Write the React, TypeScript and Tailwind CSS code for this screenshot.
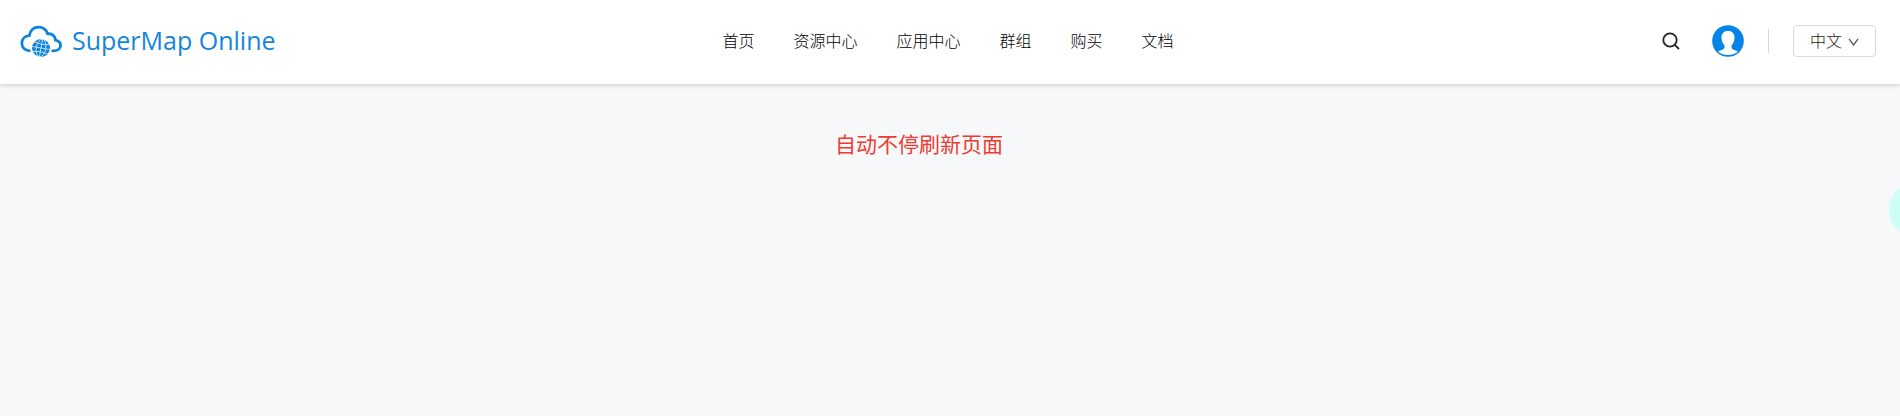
import React from 'react';

const navItems = [
    { label: '首页', href: '#home' },
    { label: '资源中心', href: '#resources' },
    { label: '应用中心', href: '#apps' },
    { label: '群组', href: '#groups' },
    { label: '购买', href: '#buy' },
    { label: '文档', href: '#docs' },
];

const Logo: React.FC = () => (
    <svg viewBox="0 0 42 32" className="h-8 w-[42px]" fill="none" aria-hidden="true">
        <path
            d="M10.5 25.8C5.400 26 1.800 22.500 1.800 18.300C1.800 14 5 11 9.300 10.700C10.400 5.300 13.800 2.200 18.600 2.200C23 2.200 26.200 4.600 27.600 8.800C32.300 8.300 35.200 11 35.500 15.200C38.700 16 40.600 18.100 40.600 20.400C40.600 23.800 37.400 25.800 33.200 25.800H31.500"
            stroke="#0f83dc"
            strokeWidth="2.800"
        />
        {/* Globe */}
        <circle cx="21" cy="23" r="9" fill="#0f83dc" />
        <g stroke="#ffffff" strokeWidth="0.9" opacity="0.75" transform="rotate(10 21 23)">
            <path d="M21 14V32M12 23H30" />
            <ellipse cx="21" cy="23" rx="4.700" ry="9" />
            <path d="M13.500 18.300Q21 20.300 28.500 18.300M13.500 27.700Q21 25.700 28.500 27.700" />
        </g>
    </svg>
);

const Avatar: React.FC = () => (
    <svg viewBox="0 0 32 32" className="size-8" aria-hidden="true">
        <circle cx="16" cy="16" r="15.800" fill="#0484e4" />
        <path
            d="M16 6C11.700 6 9.300 8.700 9.500 13C9.600 16.300 10.900 18.800 12.400 20.300C13 22.800 12.200 24 9.800 25C8.200 25.600 6.800 26 5.900 26.500C8.700 28.900 12 30.100 16 30.100S23.300 28.900 26.100 26.500C25.200 26 23.800 25.600 22.200 25C19.800 24 19 22.800 19.600 20.300C21.100 18.800 22.400 16.300 22.500 13C22.700 8.700 20.300 6 16 6Z"
            fill="#ffffff"
        />
    </svg>
);

const Header: React.FC = () => (
    <header className="relative grid h-[84px] grid-cols-[1fr_auto_1fr] items-center bg-white pr-6 pb-0.5 pl-5 shadow-[0_1px_5px_rgba(0,0,0,0.2)]">
        <a href="#home" className="flex items-center gap-2.5 justify-self-start">
            <Logo />
            <span className="pb-0.5 font-['Open_Sans','Noto_Sans',sans-serif] text-[25px] leading-8 text-[#1585dc]">
                SuperMap Online
            </span>
        </a>

        <nav className="flex items-center gap-[39px] pt-0.5">
            {navItems.map((item) => (
                <a key={item.label} href={item.href} className="text-base font-light whitespace-nowrap text-black">
                    {item.label}
                </a>
            ))}
        </nav>

        <div className="flex items-center justify-self-end">
            <button type="button" aria-label="搜索" className="mr-8">
                <svg viewBox="0 0 18 18" className="size-[18px]" fill="none" stroke="#222222" strokeWidth="1.800" aria-hidden="true">
                    <circle cx="8" cy="8" r="6.700" />
                    <path d="M12.800 12.800L17 17" />
                </svg>
            </button>
            <button type="button" aria-label="账户" className="mr-6">
                <Avatar />
            </button>
            <div className="mr-6 h-6 w-px bg-[#d9d9d9]" />
            <button
                type="button"
                className="flex h-8 items-center gap-1.5 rounded-sm border border-[#d9d9d9] px-4 pt-0.5 text-base font-light text-[#222222]"
            >
                中文
                <svg viewBox="0 0 11 8" className="h-2 w-[11px]" fill="none" stroke="#555555" strokeWidth="1.300" aria-hidden="true">
                    <path d="M1 0.800L5.500 7L10 0.800" />
                </svg>
            </button>
        </div>
    </header>
);

const App: React.FC = () => (
    <div className="relative min-h-screen overflow-hidden bg-[#f7f8fa] font-['Liberation_Sans','Noto_Sans_CJK_SC',sans-serif]">
        <Header />
        <main className="pt-[45px] pr-[62px] text-center">
            <p className="text-[21px] leading-8 text-[#ee3a30]">自动不停刷新页面</p>
        </main>

        {/* Floating helper, mostly tucked behind the right edge */}
        <div className="absolute top-[182px] -right-[45px] size-14 rounded-full bg-[#ccfff6]" />
    </div>
);

export default App;
